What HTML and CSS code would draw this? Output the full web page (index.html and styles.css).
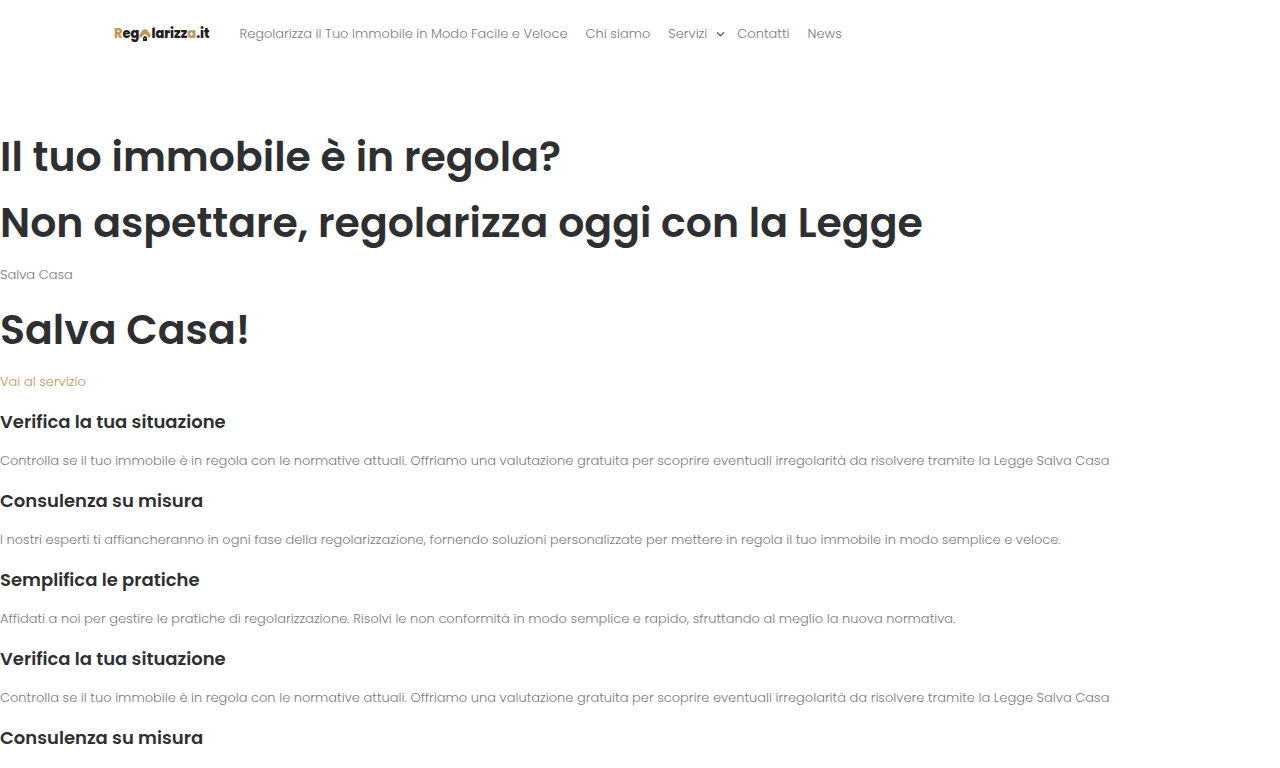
FILE: index.html
```html
<!DOCTYPE html>
<html lang="it">
<head>
<meta charset="utf-8">
<title>Regolarizza.it</title>
<meta name="viewport" content="width=device-width, initial-scale=1">
<link rel="stylesheet" href="styles.css">
</head>
<body>
<header class="site-header">
  <a class="logo" href="#" aria-label="Regolarizza.it"><span class="gold">R</span>eg<svg class="logo-house" viewBox="0 0 12 14" aria-hidden="true"><path d="M0 8.500C1.500 7 3 2 6 2s4.500 5 6 6.500L9.800 11C8.500 9.500 7.500 7.200 6 7.200S3.500 9.500 2.200 11C1.500 10.500 0.500 9.500 0 8.500z" fill="#c19a5b"/><path d="M4 10.500L6 8.800l2 1.700V14H4z" fill="#222"/><path d="M5.500 11h1v1h-1z" fill="#ddd"/></svg>larizz<span class="gold">a</span>.it</a>
  <nav class="menu">
    <a href="#">Regolarizza il Tuo Immobile in Modo Facile e Veloce</a>
    <a href="#">Chi siamo</a>
    <a class="has-sub" href="#">Servizi<svg class="chevron" viewBox="0 0 10 6" aria-hidden="true"><path d="M1 1l4 4 4-4"/></svg></a>
    <a href="#">Contatti</a>
    <a href="#">News</a>
  </nav>
</header>
<main class="content">
  <h1>Il tuo immobile è in regola?</h1>
  <h1>Non aspettare, regolarizza oggi con la Legge</h1>
  <p>Salva Casa</p>
  <h1>Salva Casa!</h1>
  <p><a class="cta" href="#">Vai al servizio</a></p>
  <h3>Verifica la tua situazione</h3>
  <p>Controlla se il tuo immobile è in regola con le normative attuali. Offriamo una valutazione gratuita per scoprire eventuali irregolarità da risolvere tramite la Legge Salva Casa</p>
  <h3>Consulenza su misura</h3>
  <p>I nostri esperti ti affiancheranno in ogni fase della regolarizzazione, fornendo soluzioni personalizzate per mettere in regola il tuo immobile in modo semplice e veloce.</p>
  <h3>Semplifica le pratiche</h3>
  <p>Affidati a noi per gestire le pratiche di regolarizzazione. Risolvi le non conformità in modo semplice e rapido, sfruttando al meglio la nuova normativa.</p>
  <h3>Verifica la tua situazione</h3>
  <p>Controlla se il tuo immobile è in regola con le normative attuali. Offriamo una valutazione gratuita per scoprire eventuali irregolarità da risolvere tramite la Legge Salva Casa</p>
  <h3>Consulenza su misura</h3>
</main>
</body>
</html>
```
FILE: styles.css
```css
body {
  margin: 0;
  background: #fff;
  color: #7a7a7a;
  font: 300 13px/26px Poppins, Inter, sans-serif;
}
a { color: inherit; text-decoration: none; }
.site-header {
  display: flex;
  align-items: center;
  gap: 30px;
  padding: 21px 114px 20px;
}
.logo {
  display: flex;
  align-items: center;
  color: #1d1d1f;
  font-weight: 800;
}
.gold { color: #c19a5b; }
.logo-house { width: 12px; height: 14px; }
.menu { display: flex; gap: 18px; white-space: nowrap; }
.has-sub { display: flex; align-items: center; gap: 9px; margin-right: -6px; }
.chevron { width: 9px; height: 6px; fill: none; stroke: #666; stroke-width: 1.5; }
.content { padding-top: 63px; }
h1, h3 { margin: 0; color: #2d2f31; font-weight: 600; }
h1 { font-size: 41px; line-height: 54px; margin-bottom: 12px; }
h3 { font-size: 18px; line-height: 24px; margin-bottom: 14px; }
p { margin: 0 0 15px; }
.cta { color: #b8965a; }
```
